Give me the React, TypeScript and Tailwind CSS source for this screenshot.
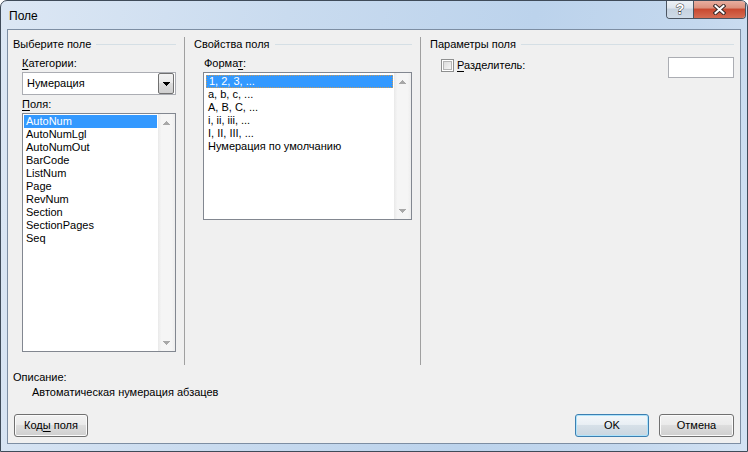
import React from "react";

const FONT = "font-['Liberation_Sans',Arial,sans-serif]";

function UpArrow({ color = "#a8a8a8" }: { color?: string }) {
  return (
    <svg width="7" height="4" viewBox="0 0 7 4" shapeRendering="crispEdges">
      <rect x="3" y="0" width="1" height="1" fill={color} />
      <rect x="2" y="1" width="3" height="1" fill={color} />
      <rect x="1" y="2" width="5" height="1" fill={color} />
      <rect x="0" y="3" width="7" height="1" fill={color} />
    </svg>
  );
}

function DownArrow({ color = "#a8a8a8" }: { color?: string }) {
  return (
    <svg width="7" height="4" viewBox="0 0 7 4" shapeRendering="crispEdges">
      <rect x="0" y="0" width="7" height="1" fill={color} />
      <rect x="1" y="1" width="5" height="1" fill={color} />
      <rect x="2" y="2" width="3" height="1" fill={color} />
      <rect x="3" y="3" width="1" height="1" fill={color} />
    </svg>
  );
}

function VScroll() {
  return (
    <div className="w-[17px] h-full flex flex-col justify-between bg-[linear-gradient(90deg,#e9e9e9,#f5f5f5_20%,#f5f5f5_80%,#ededed)]">
      <div className="h-[17px] flex items-center justify-center">
        <UpArrow />
      </div>
      <div className="h-[17px] flex items-center justify-center">
        <DownArrow />
      </div>
    </div>
  );
}

function GroupHeader({ title }: { title: string }) {
  return (
    <div className="flex items-center h-[15px] gap-[5px] text-[11px] leading-[15px]">
      <span className="whitespace-nowrap">{title}</span>
      <div className="flex-1 h-px bg-[#d5dfe5]" />
    </div>
  );
}

function ListItem({
  text,
  selected,
  focus,
}: {
  text: string;
  selected?: boolean;
  focus?: boolean;
}) {
  return (
    <div
      className={
        "h-[13px] text-[11px] pl-[2px] whitespace-nowrap " +
        (selected ? "bg-[#3399ff] text-white " : "text-black ") +
        (focus ? "border border-dotted border-[#c89a5a] pl-[1px] leading-[11px]" : "leading-[13px]")
      }
    >
      {text}
    </div>
  );
}

function Button({
  children,
  width,
  isDefault,
}: {
  children: React.ReactNode;
  width: string;
  isDefault?: boolean;
}) {
  return (
    <div
      className={
        width +
        " h-[23px] rounded-[3px] border flex items-center justify-center text-[11px] text-black " +
        (isDefault
          ? "border-[#3c7fb1] shadow-[inset_0_0_0_1px_#aee3fb] bg-[linear-gradient(180deg,#f3f7fa_0%,#e9eff4_45%,#d6e0e8_50%,#cad6e0_100%)]"
          : "border-[#707070] shadow-[inset_0_0_0_1px_#fbfbfb] bg-[linear-gradient(180deg,#f2f2f2_0%,#ebebeb_45%,#dddddd_50%,#cfcfcf_100%)]")
      }
    >
      {children}
    </div>
  );
}

const U = ({ children }: { children: React.ReactNode }) => (
  <span className="underline underline-offset-[2px] decoration-1">{children}</span>
);

export default function App() {
  const fields = [
    "AutoNum",
    "AutoNumLgl",
    "AutoNumOut",
    "BarCode",
    "ListNum",
    "Page",
    "RevNum",
    "Section",
    "SectionPages",
    "Seq",
  ];
  const formats = [
    "1, 2, 3, ...",
    "a, b, c, ...",
    "A, B, C, ...",
    "i, ii, iii, ...",
    "I, II, III, ...",
    "Нумерация по умолчанию",
  ];

  return (
    <div
      className={
        FONT +
        " w-[748px] h-[452px] overflow-hidden flex flex-col border border-[#3f4b59] rounded-t-[7px] bg-[linear-gradient(100deg,#dce7f4_0%,#c9dbef_35%,#bcd3ec_65%,#c4d8ee_85%,#d3e2f3_100%)]"
      }
    >
      {/* Title bar */}
      <div className="h-[28px] flex items-start shrink-0">
        <div className="pl-[8px] pt-[7px] text-[12px] leading-[16px] text-black">Поле</div>
        <div className="ml-auto mr-[1px] -mt-px flex border-x border-b border-[#4b5561] rounded-b-[4px] overflow-hidden h-[19px]">
          <div className="w-[27px] h-full flex items-center justify-center bg-[linear-gradient(180deg,#eef2f6_0%,#dfe6ee_45%,#c6d2df_50%,#cfdbe8_100%)] border-r border-[#4b5561]">
            <span className="text-[14px] leading-[14px] font-bold text-white [-webkit-text-stroke:1px_#3d3d3d] [paint-order:stroke_fill]">
              ?
            </span>
          </div>
          <div className="w-[51px] h-full flex items-center justify-center bg-[linear-gradient(180deg,#eab2a4_0%,#dc907c_45%,#c8482f_50%,#d56c52_100%)]">
            <svg width="13" height="11" viewBox="0 0 13 11">
              <path d="M2.5 2 L10.5 9 M10.5 2 L2.5 9" stroke="#3a2a28" strokeWidth="4" strokeLinecap="square" />
              <path d="M2.5 2 L10.5 9 M10.5 2 L2.5 9" stroke="#ffffff" strokeWidth="2" strokeLinecap="square" />
            </svg>
          </div>
        </div>
      </div>

      {/* Client area */}
      <div className="mx-[6px] h-[415px] shrink-0 border border-[#7d8ea3] bg-[#f0f0f0] flex flex-col text-black">
        {/* Groups row */}
        <div className="flex pl-[5px] pr-[6px] pt-[7px] h-[334px]">
          {/* Column 1 */}
          <div className="w-[163px] flex flex-col">
            <GroupHeader title="Выберите поле" />
            <div className="pl-[9px] flex flex-col">
              <div className="mt-[4px] h-[15px] text-[11px] leading-[15px]">
                <U>К</U>атегории:
              </div>
              <div className="mt-px w-[154px] h-[23px] border border-[#abadb3] bg-white flex items-center">
                <div className="flex-1 pl-[4px] text-[11px] leading-[15px]">Нумерация</div>
                <div className="w-[16px] h-[21px] mr-px rounded-[2px] border border-[#707070] bg-[linear-gradient(180deg,#f2f2f2_0%,#ebebeb_45%,#dddddd_50%,#cfcfcf_100%)] flex items-center justify-center">
                  <DownArrow color="#000000" />
                </div>
              </div>
              <div className="mt-[2px] h-[15px] text-[11px] leading-[15px]">
                <U>П</U>оля:
              </div>
              <div className="mt-px w-[154px] h-[239px] border border-[#828790] bg-white flex">
                <div className="flex-1 pt-px pl-px pr-px">
                  {fields.map((f, i) => (
                    <ListItem key={f} text={f} selected={i === 0} />
                  ))}
                </div>
                <VScroll />
              </div>
            </div>
          </div>

          <div className="ml-[8px] w-px h-[328px] bg-[#a0a0a0]" />

          {/* Column 2 */}
          <div className="ml-[9px] w-[218px] flex flex-col">
            <GroupHeader title="Свойства поля" />
            <div className="mt-[4px] pl-[10px] h-[15px] text-[11px] leading-[15px]">
              Форма<U>т</U>:
            </div>
            <div className="ml-[9px] mt-px w-[209px] h-[148px] border border-[#828790] bg-white flex">
              <div className="flex-1 pt-[2px] pl-[2px] pr-px">
                {formats.map((f, i) => (
                  <ListItem key={f} text={f} selected={i === 0} focus={i === 0} />
                ))}
              </div>
              <VScroll />
            </div>
          </div>

          <div className="ml-[8px] w-px h-[328px] bg-[#a0a0a0]" />

          {/* Column 3 */}
          <div className="ml-[9px] flex-1 flex flex-col">
            <GroupHeader title="Параметры поля" />
            <div className="mt-[5px] flex items-start pl-[11px]">
              <div className="mt-[2px] w-[13px] h-[13px] border border-[#8e8f8f] bg-white p-px">
                <div className="w-full h-full border border-[#b5b5b5] bg-[linear-gradient(135deg,#dcdcdc,#f5f5f5)]" />
              </div>
              <div className="ml-[3px] mt-px text-[11px] leading-[15px]">
                <U>Р</U>азделитель:
              </div>
              <div className="ml-auto w-[66px] h-[21px] border border-[#abadb3] bg-white" />
            </div>
          </div>
        </div>

        {/* Description */}
        <div className="mt-[6px] pl-[5px] h-[15px] text-[11px] leading-[15px]">Описание:</div>
        <div className="pl-[24px] h-[15px] text-[11px] leading-[15px]">
          Автоматическая нумерация абзацев
        </div>

        {/* Buttons */}
        <div className="mt-[14px] flex pl-[6px] pr-[6px]">
          <Button width="w-[74px]">
            Код<U>ы</U>&nbsp;поля
          </Button>
          <div className="ml-auto flex gap-[10px]">
            <Button width="w-[74px]" isDefault>
              OK
            </Button>
            <Button width="w-[75px]">Отмена</Button>
          </div>
        </div>
      </div>
    </div>
  );
}
